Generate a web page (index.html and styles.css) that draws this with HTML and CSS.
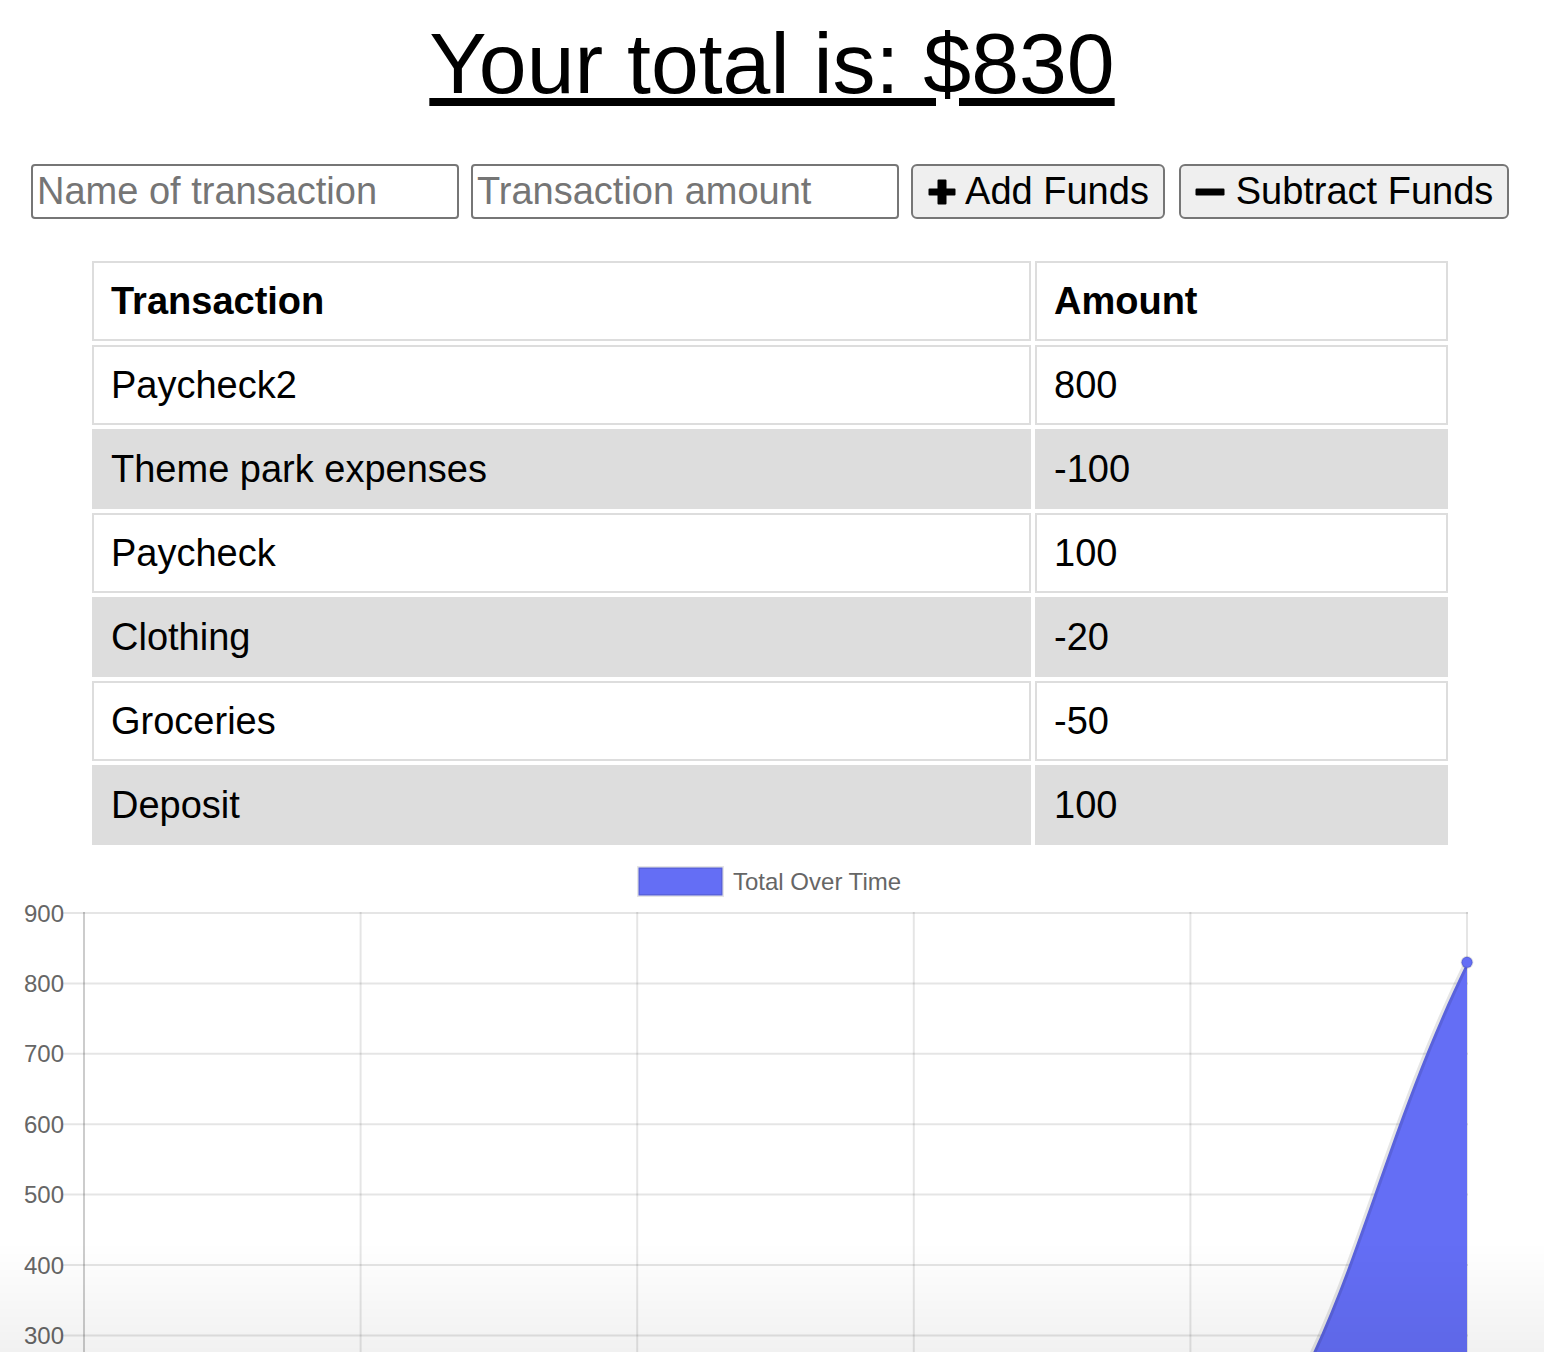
FILE: index.html
```html
<!DOCTYPE html>
<html lang="en">
<head>
<meta charset="utf-8">
<title>Budget Tracker</title>
<link rel="stylesheet" href="styles.css">
</head>
<body>
<h1 class="total">Your total is: $830</h1>

<form class="entry">
  <input class="field" type="text" placeholder="Name of transaction">
  <input class="field" type="number" placeholder="Transaction amount">
  <button type="button" class="btn btn-add">
    <svg class="ico" viewBox="0 0 30 30" width="30" height="30" aria-hidden="true"><path d="M11.5 2.5h7a1 1 0 0 1 1 1v8h8a1 1 0 0 1 1 1v5a1 1 0 0 1-1 1h-8v8a1 1 0 0 1-1 1h-7a1 1 0 0 1-1-1v-8h-8a1 1 0 0 1-1-1v-5a1 1 0 0 1 1-1h8v-8a1 1 0 0 1 1-1z" fill="#000"/></svg>
    <span>Add Funds</span>
  </button>
  <button type="button" class="btn btn-sub">
    <svg class="ico" viewBox="0 0 30 30" width="30" height="30" aria-hidden="true"><rect x="0.5" y="11.5" width="29" height="7" rx="1.2" fill="#000"/></svg>
    <span>Subtract Funds</span>
  </button>
</form>

<table class="ledger">
  <thead>
    <tr><th class="c-name">Transaction</th><th class="c-amt">Amount</th></tr>
  </thead>
  <tbody>
    <tr><td>Paycheck2</td><td>800</td></tr>
    <tr class="alt"><td>Theme park expenses</td><td>-100</td></tr>
    <tr><td>Paycheck</td><td>100</td></tr>
    <tr class="alt"><td>Clothing</td><td>-20</td></tr>
    <tr><td>Groceries</td><td>-50</td></tr>
    <tr class="alt"><td>Deposit</td><td>100</td></tr>
  </tbody>
</table>

<svg class="chart" viewBox="0 849 1544 720" width="1544" height="720" aria-label="Total Over Time chart">
  <!-- legend -->
  <rect x="638.5" y="867.5" width="84" height="28" fill="#646ef5" stroke="rgba(0,0,0,0.1)" stroke-width="3"/>
  <text class="legend" x="733" y="890">Total Over Time</text>

  <!-- horizontal grid lines + ticks -->
  <g stroke="rgba(0,0,0,0.1)" stroke-width="2">
    <line x1="63" y1="913" x2="1468" y2="913"/>
    <line x1="63" y1="983.4" x2="1468" y2="983.4"/>
    <line x1="63" y1="1053.8" x2="1468" y2="1053.8"/>
    <line x1="63" y1="1124.2" x2="1468" y2="1124.2"/>
    <line x1="63" y1="1194.6" x2="1468" y2="1194.6"/>
    <line x1="63" y1="1265" x2="1468" y2="1265"/>
    <line x1="63" y1="1335.4" x2="1468" y2="1335.4"/>
    <line x1="63" y1="1405.8" x2="1468" y2="1405.8"/>
    <line x1="63" y1="1476.2" x2="1468" y2="1476.2"/>
  </g>
  <!-- vertical grid lines -->
  <g stroke="rgba(0,0,0,0.1)" stroke-width="2">
    <line x1="360.6" y1="912" x2="360.6" y2="1567"/>
    <line x1="637.2" y1="912" x2="637.2" y2="1567"/>
    <line x1="913.8" y1="912" x2="913.8" y2="1567"/>
    <line x1="1190.4" y1="912" x2="1190.4" y2="1567"/>
    <line x1="1467" y1="912" x2="1467" y2="1567"/>
  </g>
  <line x1="84" y1="912" x2="84" y2="1567" stroke="rgba(0,0,0,0.2)" stroke-width="2"/>

  <!-- y labels -->
  <g class="ylab">
    <text x="64" y="921.6">900</text>
    <text x="64" y="992">800</text>
    <text x="64" y="1062.4">700</text>
    <text x="64" y="1132.8">600</text>
    <text x="64" y="1203.2">500</text>
    <text x="64" y="1273.6">400</text>
    <text x="64" y="1344">300</text>
    <text x="64" y="1414.4">200</text>
    <text x="64" y="1484.8">100</text>
  </g>

  <!-- data area -->
  <path d="M84,1476.2 C150,1490 280,1510 360.6,1511.4 C450,1515 560,1528 637.2,1525.5 C720,1522 830,1450 913.8,1455.1 C1000,1460 1121,1546 1190.4,1525.5 C1342.5,1390 1356.4,1187.6 1467,962.3 L1467,1546.6 L84,1546.6 Z" fill="#646ef5"/>
  <path d="M84,1476.2 C150,1490 280,1510 360.6,1511.4 C450,1515 560,1528 637.2,1525.5 C720,1522 830,1450 913.8,1455.1 C1000,1460 1121,1546 1190.4,1525.5 C1342.5,1390 1356.4,1187.6 1467,962.3" fill="none" stroke="rgba(0,0,0,0.1)" stroke-width="6"/>
  <circle cx="1467" cy="962.3" r="5.5" fill="#646ef5" stroke="rgba(0,0,0,0.1)" stroke-width="2"/>
</svg>

<div class="shade" aria-hidden="true"></div>
</body>
</html>
```

FILE: styles.css
```css
html, body {
  margin: 0;
  padding: 0;
  background: #ffffff;
}

body {
  font-family: "Liberation Sans", Arial, Helvetica, sans-serif;
  color: #000;
}

.total {
  margin: 14px 0 52px;
  font-size: 86px;
  line-height: 98px;
  font-weight: normal;
  text-align: center;
  text-decoration: underline;
}

.entry {
  display: flex;
  align-items: center;
  margin: 0 0 0 31px;
  gap: 12px;
}

.field {
  box-sizing: border-box;
  width: 428px;
  height: 55px;
  margin: 0;
  padding: 0 4px 1px;
  border: 2px solid #767676;
  border-radius: 4px;
  font-family: "Liberation Sans", Arial, sans-serif;
  font-size: 38px;
  color: #000;
  background: #fff;
  -moz-appearance: textfield;
}

.field::placeholder {
  color: #757575;
  opacity: 1;
}

.field::-webkit-outer-spin-button,
.field::-webkit-inner-spin-button {
  -webkit-appearance: none;
  margin: 0;
}

.btn {
  box-sizing: border-box;
  display: inline-flex;
  align-items: center;
  justify-content: center;
  gap: 8px;
  height: 55px;
  margin: 0;
  padding: 0;
  border: 2px solid #767676;
  border-radius: 6px;
  background: #efefef;
  font-family: "Liberation Sans", Arial, sans-serif;
  font-size: 38px;
  color: #000;
  cursor: pointer;
}

.btn-add {
  width: 254px;
}

.btn-sub {
  width: 330px;
  margin-left: 2px;
  gap: 11px;
}

.ico {
  display: block;
  flex: none;
}

.ledger {
  margin: 38px 0 0 88px;
  width: 1364px;
  border-collapse: separate;
  border-spacing: 4px;
  font-size: 38px;
}

.ledger th,
.ledger td {
  height: 76px;
  padding: 0 17px;
  border: 2px solid #dddddd;
  text-align: left;
  vertical-align: middle;
}

.ledger th {
  font-weight: bold;
}

.c-name {
  width: 901px;
}

.ledger tr.alt td {
  background: #dddddd;
}

.chart {
  display: block;
}

.chart .legend {
  font-family: "Liberation Sans", Arial, sans-serif;
  font-size: 24px;
  fill: #666666;
}

.chart .ylab text {
  font-family: "Liberation Sans", Arial, sans-serif;
  font-size: 24px;
  fill: #666666;
  text-anchor: end;
}

.shade {
  position: fixed;
  left: 0;
  right: 0;
  bottom: 0;
  height: 110px;
  background: linear-gradient(to bottom, rgba(0, 0, 0, 0), rgba(0, 0, 0, 0.055));
  pointer-events: none;
}
```
